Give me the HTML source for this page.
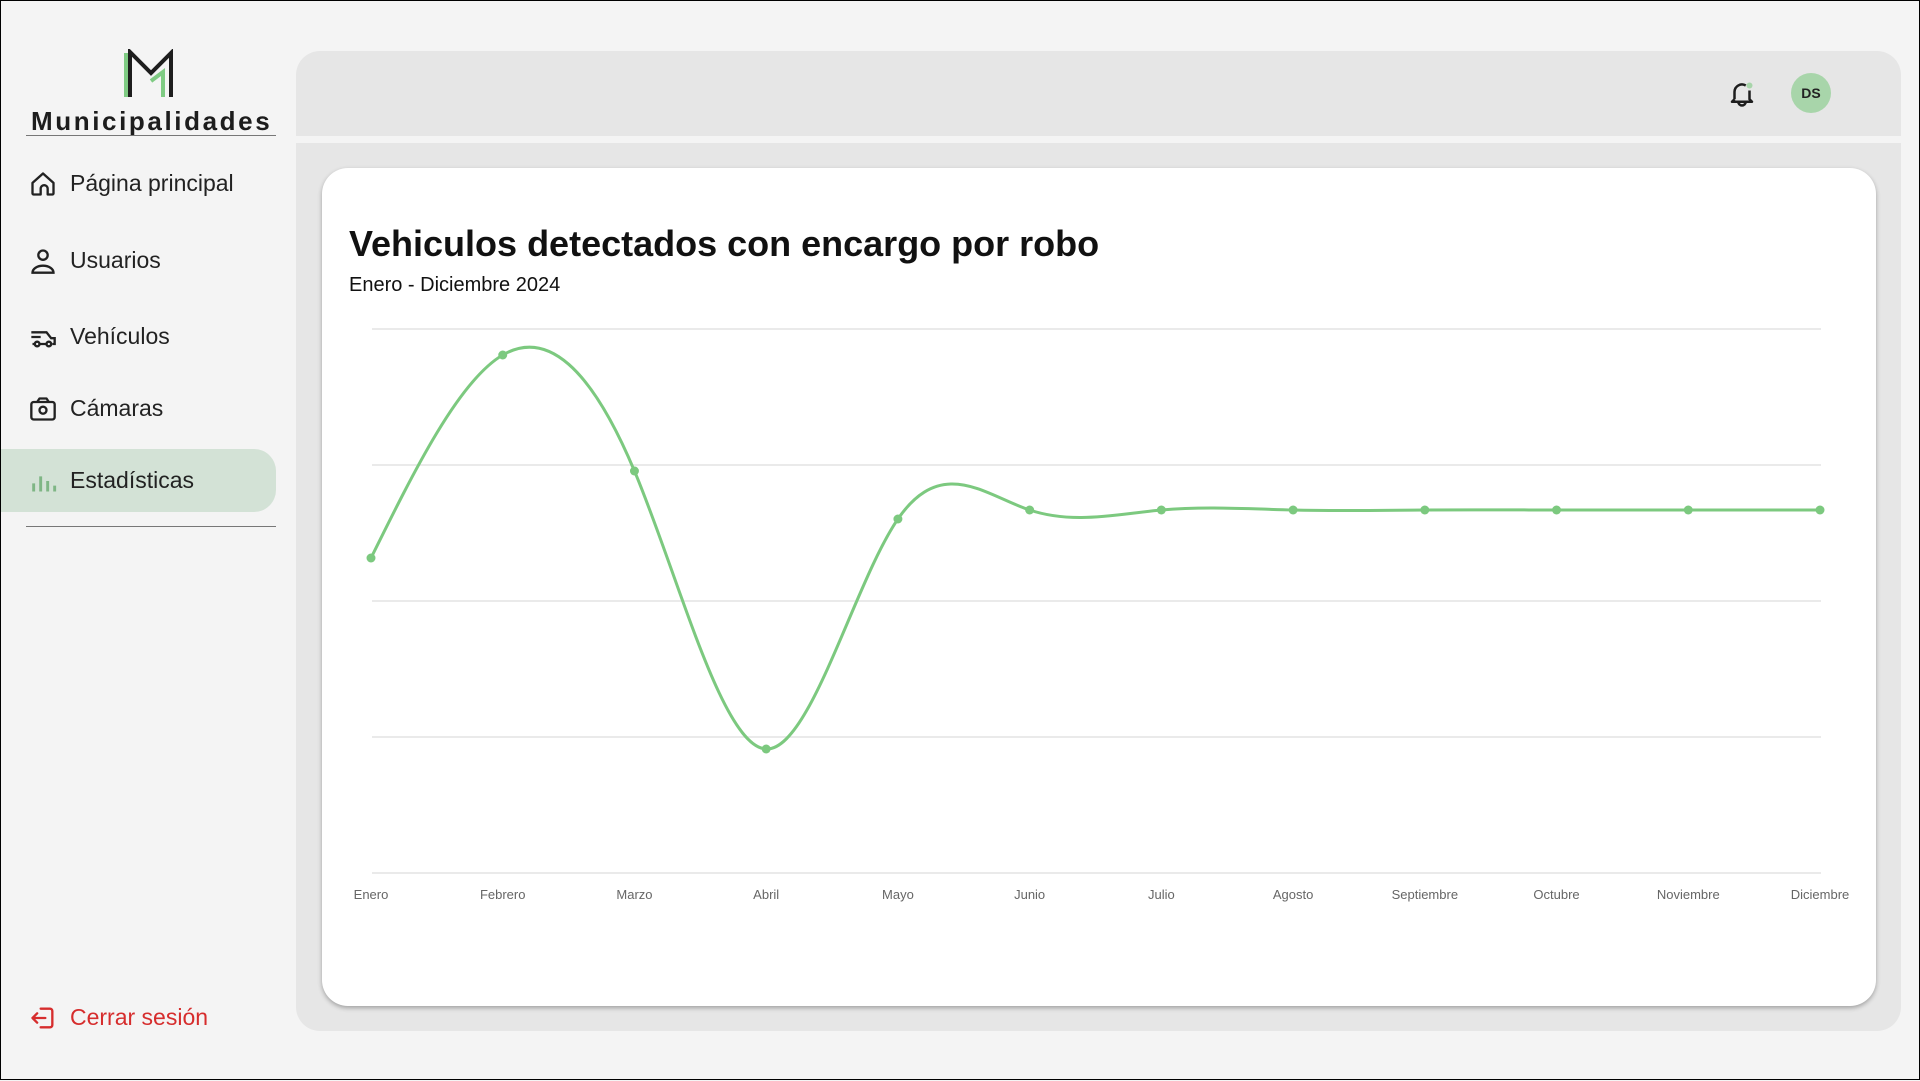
<!DOCTYPE html>
<html><head><meta charset="utf-8">
<style>
*{box-sizing:border-box;margin:0;padding:0}
body{width:1920px;height:1080px;background:#f4f4f4;font-family:"Liberation Sans",sans-serif;position:relative;overflow:hidden;border:1px solid #000}
.nav{position:absolute;left:0;width:275px;height:63px;display:flex;align-items:center;font-size:23px;color:#222}
.nav svg{position:absolute;left:28px}
.nav span{position:absolute;left:69px}
.active{background:#d3e2d6;border-radius:0 22px 22px 0}
.lbl{position:absolute;top:886px;font-size:13px;color:#666;transform:translateX(-50%)}
</style></head><body>
<svg style="position:absolute;left:120px;top:48px" width="60" height="52" viewBox="0 0 60 52">
<rect x="3" y="4" width="5" height="44" fill="#7fcb83"/>
<path d="M9 48V3l21 21 20-20v44" fill="none" stroke="#1d1d1d" stroke-width="4"/>
<path d="M30 32l12-9v25" fill="none" stroke="#7fcb83" stroke-width="4"/>
</svg>
<div style="position:absolute;left:30px;top:105px;font-size:26px;font-weight:bold;letter-spacing:2.6px;color:#1d1d1d">Municipalidades</div>
<div style="position:absolute;left:25px;top:134px;width:250px;height:1px;background:#777"></div>

<div class="nav" style="top:151px"><svg width="28" height="28" viewBox="0 0 24 24" fill="none" stroke="#222" stroke-width="2" stroke-linejoin="round"><path d="M3 11l9-8 9 8v9a1 1 0 0 1-1 1h-4v-5a3 3 0 0 0-6 0v5H4a1 1 0 0 1-1-1z"/></svg><span>Página principal</span></div>
<div class="nav" style="top:228px"><svg width="28" height="28" viewBox="0 0 24 24" fill="none" stroke="#222" stroke-width="2"><circle cx="12" cy="7" r="4"/><path d="M3 22a9 6 0 0 1 18 0z"/></svg><span>Usuarios</span></div>
<div class="nav" style="top:304px"><svg width="28" height="28" viewBox="0 0 24 24" fill="none" stroke="#222" stroke-width="2"><path d="M2 8h13l4 5h3v5h-2M5 18H3M9 18h6M2 12h8"/><circle cx="7" cy="18" r="2"/><circle cx="17" cy="18" r="2"/></svg><span>Vehículos</span></div>
<div class="nav" style="top:376px"><svg width="28" height="28" viewBox="0 0 24 24" fill="none" stroke="#222" stroke-width="2" stroke-linejoin="round"><rect x="2" y="6" width="20" height="15" rx="2"/><path d="M7 6l2-3h6l2 3"/><circle cx="12" cy="13" r="3"/></svg><span>Cámaras</span></div>
<div class="nav active" style="top:448px"><svg width="28" height="28" viewBox="0 0 24 24" stroke="#7fb685" stroke-width="2.5"><path d="M4 21v-7M10 21V8M16 21v-9M22 21v-5"/></svg><span>Estadísticas</span></div>
<div style="position:absolute;left:25px;top:525px;width:250px;height:1px;background:#777"></div>
<div class="nav" style="top:985px;color:#d62d2d"><svg width="28" height="28" viewBox="0 0 24 24" fill="none" stroke="#d62d2d" stroke-width="2" stroke-linecap="round" stroke-linejoin="round"><path d="M10 4h8a2 2 0 0 1 2 2v12a2 2 0 0 1-2 2h-8M14 12H3M7 8l-4 4 4 4"/></svg><span>Cerrar sesión</span></div>

<div style="position:absolute;left:295px;top:50px;width:1605px;height:85px;background:#e6e6e6;border-radius:24px 24px 0 0"></div>
<svg style="position:absolute;left:1726px;top:77px" width="30" height="30" viewBox="0 0 24 24" fill="none" stroke="#1d1d1d" stroke-width="2" stroke-linejoin="round"><path d="M6 17V11a6 6 0 0 1 9-5M18 10v7l2 2H4l2-2M9 19a3 3 0 0 0 6 0"/><circle cx="18" cy="6" r="2.4" fill="#a8d5aa" stroke="none"/></svg>
<div style="position:absolute;left:1790px;top:72px;width:40px;height:40px;border-radius:50%;background:#a8d5aa;font-size:14px;font-weight:bold;text-align:center;line-height:40px;color:#222">DS</div>
<div style="position:absolute;left:295px;top:142px;width:1605px;height:888px;background:#e6e6e6;border-radius:0 0 24px 24px"></div>
<div style="position:absolute;left:321px;top:167px;width:1554px;height:838px;background:#fff;border-radius:26px;box-shadow:0 2px 5px rgba(0,0,0,.3)"></div>
<div style="position:absolute;left:348px;top:222px;font-size:36px;font-weight:bold;color:#111">Vehiculos detectados con encargo por robo</div>
<div style="position:absolute;left:348px;top:273px;font-size:20px;color:#111">Enero - Diciembre 2024</div>
<svg id="ch" style="position:absolute;left:0;top:0" width="1920" height="1080"></svg>
<div id="lb"></div>
<script>
var ys=[557,354,470,748,518,509,509,509,509,509,509,509];
var names=["Enero","Febrero","Marzo","Abril","Mayo","Junio","Julio","Agosto","Septiembre","Octubre","Noviembre","Diciembre"];
var xs=ys.map(function(y,i){return 370+i*1449/11});
function cps(x){var n=x.length-1,a=[],b=[],r=[],i,m;
a[0]=0;b[0]=2;r[0]=x[0]+2*x[1];
for(i=1;i<n-1;i++){a[i]=1;b[i]=4;r[i]=4*x[i]+2*x[i+1];}
a[n-1]=2;b[n-1]=7;r[n-1]=8*x[n-1]+x[n];
for(i=1;i<n;i++){m=a[i]/b[i-1];b[i]-=m;r[i]-=m*r[i-1];}
a[n-1]=r[n-1]/b[n-1];
for(i=n-2;i>=0;i--)a[i]=(r[i]-a[i+1])/b[i];
b[n-1]=(x[n]+a[n-1])/2;
for(i=0;i<n-1;i++)b[i]=2*x[i+1]-a[i+1];
return [a,b];}
var px=cps(xs),py=cps(ys);
var s='';
[328,464,600,736,872].forEach(function(y){s+='<line x1="371" x2="1820" y1="'+y+'" y2="'+y+'" stroke="#e3e3e3" stroke-width="1.5"/>'});
var d='M'+xs[0]+','+ys[0];
for(var i=0;i<xs.length-1;i++){d+=' C'+px[0][i]+','+py[0][i]+' '+px[1][i]+','+py[1][i]+' '+xs[i+1]+','+ys[i+1];}
s+='<path d="'+d+'" fill="none" stroke="#7cc97f" stroke-width="3"/>';
xs.forEach(function(x,i){s+='<circle cx="'+x+'" cy="'+ys[i]+'" r="4.5" fill="#7cc97f"/>'});
document.getElementById('ch').innerHTML=s;
var h='';xs.forEach(function(x,i){h+='<div class="lbl" style="left:'+x+'px">'+names[i]+'</div>'});
document.getElementById('lb').innerHTML=h;
</script>
</body></html>
